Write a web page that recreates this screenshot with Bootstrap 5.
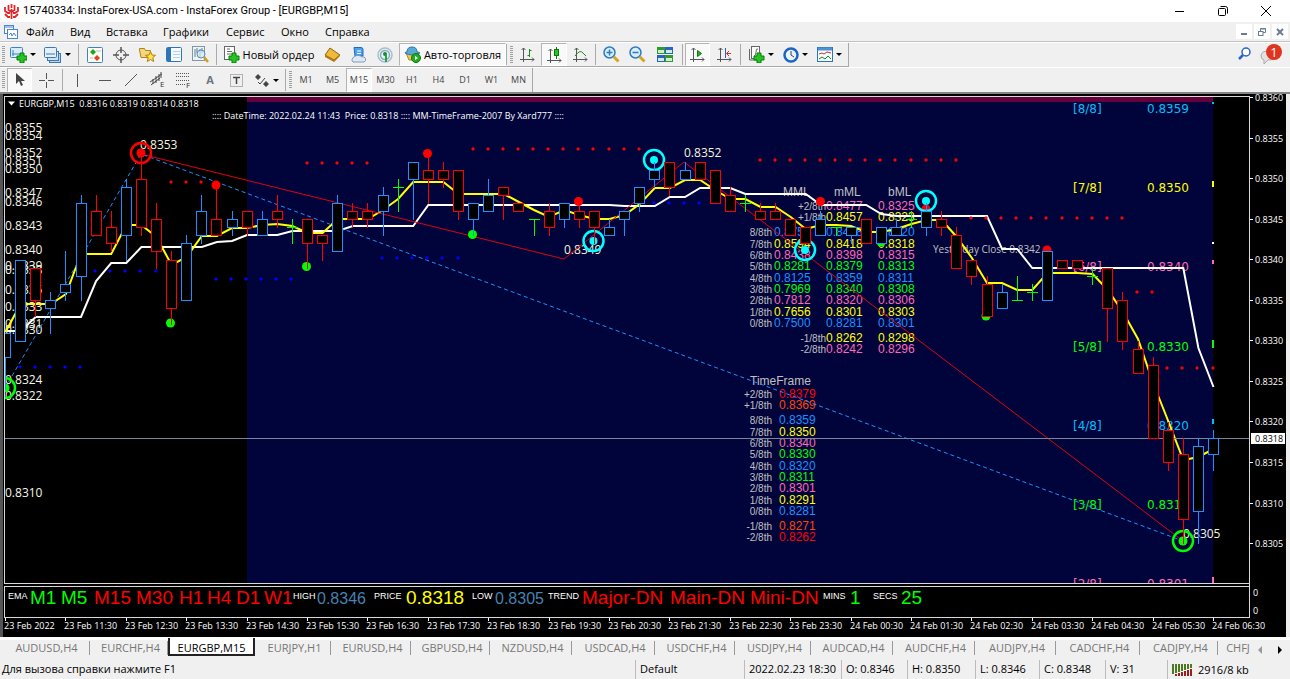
<!DOCTYPE html>
<html lang="ru">
<head>
<meta charset="utf-8">
<meta name="viewport" content="width=device-width, initial-scale=1">
<title>InstaForex – EURGBP,M15</title>
<link href="https://cdn.jsdelivr.net/npm/bootstrap@5.3.0/dist/css/bootstrap.min.css" rel="stylesheet">
<style>
body{font-family:"Open Sans","Noto Sans",sans-serif;font-size:11px;line-height:16px;color:#000;background:#f0f0f0}
svg{display:block;flex:none}
.title-bar{height:22px;background:#fff;padding-right:3px}
.title-text{font-family:Roboto,sans-serif;font-size:11px}
.win-btn{width:43px;height:22px;border:0;background:none;padding:0}
.menu-row{height:20px;border-bottom:1px solid #c2c2c2}
.menu-row a{color:#000;text-decoration:none}
.menu-items{display:grid;grid-template-columns:44px 36px 57px 63px 55px 44px 60px}
.mdi-group{gap:2px;padding-right:2px}
.mdi-btn{width:16px;height:15px;border:0;background:#fff;padding:0}
.tools-row{height:25px;border-top:1px solid #fff}
.tools-main,.tools-draw{display:grid;height:24px;border-right:1px solid #a8a8a8}
.tools-main{width:849px;border-bottom:1px solid #a8a8a8;grid-template-columns:8px 30px 38px 6px 26px 26px 26px 27px 27px 5px 100px 26px 26px 28px 107px 2px 6px 27px 26px 26px 5px 26px 27px 27px 7px 25px 28px 6px 34px 34px 35px}
.tools-draw{width:533px;grid-template-columns:7px 25px 28px 4px 27px 27px 26px 27px 26px 26px 27px 33px 4px 6px 26px 27px 26px 27px 26px 27px 26px 27px 27px}
.tool{display:flex;align-items:center;justify-content:center;gap:3px;border:0;background:none;padding:0;color:#000;white-space:nowrap;min-width:0}
.tool.pressed{background:#f9f9f9;border:1px solid #b4b4b4;border-right-color:#fff;border-bottom-color:#fff}
.tool.period{font-size:9px;color:#444}
.divider{border-left:1px solid #aaa;margin:1px 0 1px 2px}
.grip{margin:3px 2px 3px 2px;background:repeating-linear-gradient(#a0a0a0 0 1px,#f0f0f0 1px 2px);width:3px}
.drop::after{content:"";border:3px solid transparent;border-top-color:#000;border-bottom:0}
.chart-frame{border-top:2px solid #858585}
.chart-frame svg{width:100%;height:auto;background:#000}
.chart-tabs{height:23px;display:grid;grid-template-columns:90px 78px 87px 76px 80px 79px 82px 83px 80px 76px 82px 82px 81px 84px 78px 36px 1fr;border-top:3px solid #fff;background:#f0f0f0}
.chart-tab{border:0;border-right:1px solid #999;background:none;color:#777;padding:0 0 0 4px;height:14px;line-height:14px;font-size:11px;text-align:center;margin-top:1px;white-space:nowrap;overflow:hidden}
.chart-tab.current{background:#fff;color:#000;border:2px solid #222;border-top:0;height:18px;margin-top:-2px;padding:3px 0 0}
.chart-tab.flat{border-right:0}
.status-row{height:19px;line-height:18px;display:grid;grid-template-columns:635px 109px 97px 66px 68px 64px 66px 62px 1fr;background:#f0f0f0}
.status-cell{border-left:1px solid #bbb;padding-left:4px;white-space:nowrap}
.status-cell.hint{border-left:0;padding-left:2px}
</style>
</head>
<body>
<header>
 <div class="title-bar d-flex align-items-center">
  <svg class="ms-1" width="15" height="17" viewBox="0 0 15 17" fill="none" stroke="#e0262b" stroke-width="2"><path d="M7.500 6v10M4.500 2v5l3 2 3-2V2M7.500 1v4M1 4v4l3 2h2M14 4v4l-3 2H9M1 11l3 3h2M14 11l-3 3H9" stroke-width="1.800"/></svg>
  <span class="title-text flex-grow-1 ps-1">15740334: InstaForex-USA.com - InstaForex Group - [EURGBP,M15]</span>
  <button class="win-btn" aria-label="Свернуть"><svg class="mx-auto" width="10" height="10" stroke="#000"><path d="M0 5.500h9"/></svg></button>
  <button class="win-btn" aria-label="Развернуть"><svg class="mx-auto" width="10" height="10" fill="none" stroke="#000"><rect x=".5" y="2.500" width="7" height="7" rx="1"/><path d="M2.500.5h5a2 2 0 0 1 2 2v5"/></svg></button>
  <button class="win-btn" aria-label="Закрыть"><svg class="mx-auto" width="10" height="10" stroke="#000"><path d="M0 0l10 10M10 0L0 10"/></svg></button>
 </div>
 <nav class="menu-row d-flex align-items-center">
  <svg class="ms-1" width="14" height="14" viewBox="0 0 14 14" fill="#fff" stroke="#4a86d0"><rect x=".5" y=".5" width="9" height="8"/><rect x="3.500" y="4.500" width="10" height="9"/><path d="M1 2h9M5 10l2-2 1 3 2-3 2 3" fill="none"/></svg>
  <div class="menu-items flex-grow-1 ms-2"><a href="#">Файл</a><a href="#">Вид</a><a href="#">Вставка</a><a href="#">Графики</a><a href="#">Сервис</a><a href="#">Окно</a><a href="#">Справка</a></div>
  <div class="mdi-group d-flex">
   <button class="mdi-btn" aria-label="Свернуть окно"><svg class="mx-auto" width="8" height="8"><path d="M1 6h6" stroke="#6b7c92" stroke-width="2"/></svg></button>
   <button class="mdi-btn" aria-label="Восстановить окно"><svg class="mx-auto" width="8" height="8" fill="none" stroke="#6b7c92"><path d="M2.500 3V.5h5v4H5M2 1h6"/><rect x=".5" y="3.500" width="4.500" height="4"/></svg></button>
   <button class="mdi-btn" aria-label="Закрыть окно"><svg class="mx-auto" width="8" height="8" stroke="#6b7c92" stroke-width="2"><path d="M1 1l6 6M7 1L1 7"/></svg></button>
  </div>
 </nav>
 <div class="tools-row d-flex align-items-start">
  <div class="tools-main">
   <i class="grip"></i>
   <button class="tool drop" aria-label="Новый график"><svg width="17" height="16"><rect x=".5" y=".5" width="12" height="10" rx="1" fill="#d7ebfb" stroke="#3f83bb"/><path d="M3 3v6M2 7h8" fill="none" stroke="#3f83bb"/><path d="M7 9h3V6h4v3h3v4h-3v3h-4v-3H7z" fill="#22c522" stroke="#087c08"/></svg></button>
   <button class="tool drop" aria-label="Профили"><svg width="18" height="16" stroke="#3f78b0"><rect x="5.500" y="6.500" width="11" height="9" fill="#b8d6ee"/><rect x="3.500" y="4.500" width="11" height="9" fill="#cfe3f4"/><rect x=".5" y=".5" width="12" height="10" rx="1" fill="#e4f1fb"/><path d="M2 7h9"/></svg></button>
   <i class="divider"></i>
   <button class="tool" aria-label="Обзор рынка"><svg width="16" height="16"><rect x=".5" y=".5" width="15" height="15" rx="1" fill="#fffdf2" stroke="#3f83bb"/><path d="M6 2l3 3-3 3-3-3z" fill="#13a92a"/><path d="M10 8l3 3-3 3-3-3z" fill="#e0402a"/><path d="M9 4h5M3 11h3" stroke="#bbb"/></svg></button>
   <button class="tool" aria-label="Окно данных"><svg width="16" height="16" fill="none" stroke="#555"><circle cx="8" cy="8" r="5"/><path d="M8 0v6M8 10v6M0 8h6M10 8h6" stroke-width="1.500"/></svg></button>
   <button class="tool" aria-label="Навигатор"><svg width="17" height="16"><path d="M.5 3V1.500h5l1 2h5v7H2z" fill="#f4d77a" stroke="#ad8424"/><path d="M11.500 4.500l1.500 3.500 3.500.3-2.700 2.300.9 3.900-3.200-2-3.200 2 .9-3.900L6.500 8.300l3.500-.3z" fill="#ffe14a" stroke="#b08010"/></svg></button>
   <button class="tool" aria-label="Терминал"><svg width="16" height="15"><rect x=".5" y=".5" width="15" height="14" rx="1" fill="#f4faff" stroke="#2e74b8"/><path d="M3 1v13" stroke="#2e74b8" stroke-width="4"/><path d="M7 4.500h7M7 7.500h7M7 10.500h7" stroke="#b9cfe4"/></svg></button>
   <button class="tool" aria-label="Тестер стратегий"><svg width="17" height="17"><rect x=".5" y=".5" width="12" height="14" fill="#eef4f8" stroke="#8097a8"/><path d="M3 3v8M5 2v5M8 3v8M10 2v5" stroke="#5c7d95"/><circle cx="9" cy="8" r="4" fill="#d2ebfa" fill-opacity=".7" stroke="#5b8bb0"/><path d="M12 11l4 5" stroke="#d39b20" stroke-width="2.500"/></svg></button>
   <i class="divider"></i>
   <button class="tool"><svg width="16" height="17"><rect x=".5" y=".5" width="10" height="13" fill="#fff" stroke="#666"/><path d="M3 3h3M3 5.500h5M3 8h5" stroke="#666"/><path d="M5 10h3V7h4v3h3v4h-3v3H8v-3H5z" fill="#22c522" stroke="#087c08"/></svg>Новый ордер</button>
   <button class="tool" aria-label="Редактор"><svg width="17" height="15"><path d="M1 8l5-7 10 7-6 5z" fill="#efb93a" stroke="#8e610c"/><path d="M1 8v2l9 5 6-6V7l-6 6z" fill="#b47a14"/></svg></button>
   <button class="tool" aria-label="Маркет"><svg width="17" height="16"><path d="M4 .5h7a2 2 0 0 1 2 2V9H5z" fill="#4ba3ee" stroke="#1e6cb8"/><path d="M7 4h4M7 6.500h4" stroke="#fff"/><path d="M3 15a3 3 0 0 1 1-5 5 4 0 0 1 8 0 2.500 2.500 0 0 1 2 5z" fill="#dde8f5" stroke="#8399b5"/></svg></button>
   <button class="tool" aria-label="Сигналы"><svg width="16" height="16" fill="none"><circle cx="8" cy="8" r="7" stroke="#a5bed0" stroke-width="1.500"/><circle cx="8" cy="8" r="4.500" stroke="#7db0c0" stroke-width="1.500"/><circle cx="8" cy="7" r="2" fill="#168e30"/><path d="M9 8v7" stroke="#2aa344" stroke-width="2"/></svg></button>
   <button class="tool pressed"><svg width="17" height="17"><path d="M2 7h12l-3 7H5z" fill="#f3c652" stroke="#b58622"/><path d="M3 6q0-5 5-5t5 5q3 0 3 1-8 4-15 0 0-1 2-1z" fill="#58a9d8" stroke="#2b78a8"/><circle cx="12" cy="12" r="4.500" fill="#20ae20" stroke="#087808"/><path d="M11 10l3 2-3 2z" fill="#fff"/></svg>Авто-торговля</button>
   <i class="divider ms-0"></i><i class="grip"></i>
   <button class="tool" aria-label="Бары"><svg width="15" height="15" fill="none" stroke="#555"><path d="M3.500 15V1M1.500 3l2-2 2 2M0 12.500h14M12 10.500l2 2-2 2"/><path d="M9.500 2v8M9.500 3.500h2M7.500 8.500h2" stroke="#178c17"/></svg></button>
   <button class="tool pressed" aria-label="Свечи"><svg width="15" height="16" fill="none" stroke="#555"><path d="M3.500 16V2M1.500 4l2-2 2 2M0 13.500h14M12 11.500l2 2-2 2"/><path d="M9.500 0v12" stroke="#087c08"/><rect x="7.500" y="2.500" width="4" height="6" fill="#22c522" stroke="#087c08"/></svg></button>
   <button class="tool" aria-label="Линия"><svg width="15" height="15" fill="none" stroke="#555"><path d="M3.500 15V1M1.500 3l2-2 2 2M0 12.500h14M12 10.500l2 2-2 2"/><path d="M2 9q5-7 8-3l3 3" stroke="#178c17"/></svg></button>
   <i class="divider"></i>
   <button class="tool" aria-label="Увеличить"><svg width="17" height="17"><circle cx="6.500" cy="6.500" r="5.500" fill="#d8eefb" stroke="#2f7bbd" stroke-width="1.500"/><path d="M3.500 6.500h6M6.500 3.500v6" stroke="#2f7bbd" stroke-width="1.500"/><path d="M10.500 10.500l5 5" stroke="#d3a52a" stroke-width="3"/></svg></button>
   <button class="tool" aria-label="Уменьшить"><svg width="17" height="17"><circle cx="6.500" cy="6.500" r="5.500" fill="#d8eefb" stroke="#2f7bbd" stroke-width="1.500"/><path d="M3.500 6.500h6" stroke="#2f7bbd" stroke-width="1.500"/><path d="M10.500 10.500l5 5" stroke="#d3a52a" stroke-width="3"/></svg></button>
   <button class="tool" aria-label="Плитка"><svg width="16" height="15"><path d="M0 0h8v7H0zM8 8h8v7H8z" fill="#2c9c2c"/><path d="M8 0h8v7H8zM0 8h8v7H0z" fill="#2a62c8"/><path d="M1 3h6v3H1zM9 3h6v3H9zM1 11h6v3H1zM9 11h6v3H9z" fill="#d4ecd4"/></svg></button>
   <i class="divider mx-1"></i>
   <button class="tool pressed" aria-label="Автопрокрутка"><svg width="15" height="15" fill="none" stroke="#555"><path d="M3.500 15V1M1.500 3l2-2 2 2M0 12.500h14M12 10.500l2 2-2 2"/><path d="M7.500 3.500v6l4-3z" fill="#22b522" stroke="#087c08"/></svg></button>
   <button class="tool" aria-label="Сдвиг графика"><svg width="15" height="15" fill="none" stroke="#555"><path d="M3.500 15V1M1.500 3l2-2 2 2M0 12.500h14M12 10.500l2 2-2 2"/><path d="M8.500 1v10" stroke="#2a62c8"/><path d="M14 6.500H9.500M12 4l-2.500 2.500L12 9" stroke="#c8361c"/></svg></button>
   <i class="divider"></i>
   <button class="tool drop" aria-label="Индикаторы"><svg width="16" height="17"><rect x="2.500" y=".5" width="8" height="12" fill="#fff" stroke="#666"/><path d="M.5 3v11h8M5 10q2 0 2-4t2-3" fill="none" stroke="#666"/><path d="M5 10h3V7h4v3h3v4h-3v3H8v-3H5z" fill="#22c522" stroke="#087c08"/></svg></button>
   <button class="tool drop" aria-label="Периоды"><svg width="16" height="16"><circle cx="8" cy="8" r="6.500" fill="#eaf4fd" stroke="#1c64bf" stroke-width="2.500"/><path d="M8 4v4l3 2" fill="none" stroke="#345"/></svg></button>
   <button class="tool drop" aria-label="Шаблоны"><svg width="16" height="15"><rect x=".5" y=".5" width="15" height="14" fill="#f4faff" stroke="#2e74b8"/><path d="M1 2h14" stroke="#4c92d4" stroke-width="3"/><path d="M2 7l3-1 2 1 3-2 4 1" fill="none" stroke="#c8361c"/><path d="M2 12l3-2 3 2 3-3 3 3" fill="none" stroke="#178c17"/></svg></button>
  </div>
  <div class="flex-grow-1"></div>
  <button class="tool mt-1 me-2" aria-label="Поиск"><svg width="13" height="13"><circle cx="8" cy="5" r="4" fill="#fff" stroke="#2b62c9" stroke-width="1.500"/><path d="M5 8l-4 4" stroke="#2b62c9" stroke-width="2.500"/></svg></button>
  <button class="tool me-2" aria-label="Уведомления"><svg width="23" height="22"><path d="M9 8q-7 0-7 5 0 3 3 4v4l4-4q7 0 8-4z" fill="#e2e2e2" stroke="#aaa"/><circle cx="15" cy="9" r="8" fill="#de3420"/><text x="15" y="14" font-size="13" text-anchor="middle" fill="#fff">1</text></svg></button>
 </div>
 <div class="tools-row">
  <div class="tools-draw">
   <i class="grip"></i>
   <button class="tool pressed" aria-label="Курсор"><svg width="10" height="14"><path d="M1 0v11l3-3 2 5 2-1-2-4h4z" fill="#444"/></svg></button>
   <button class="tool" aria-label="Перекрестие"><svg width="15" height="15" stroke="#555"><path d="M7.500 0v6M7.500 9v6M0 7.500h6M9 7.500h6"/></svg></button>
   <i class="divider"></i>
   <button class="tool" aria-label="Вертикальная линия"><svg width="3" height="13" stroke="#555"><path d="M1.500 0v13"/></svg></button>
   <button class="tool" aria-label="Горизонтальная линия"><svg width="12" height="3" stroke="#555"><path d="M0 1.500h12"/></svg></button>
   <button class="tool" aria-label="Трендовая линия"><svg width="12" height="12" stroke="#555"><path d="M0 12L12 0"/></svg></button>
   <button class="tool" aria-label="Канал"><svg width="16" height="18" stroke="#444" fill="none"><path d="M0 11l12-8M1 14l9-7M3 13V8M6 12V5M9 10V3M11 7V1"/><text x="10" y="16" font-size="8" fill="#333" stroke="none">E</text></svg></button>
   <button class="tool" aria-label="Фибоначчи"><svg width="16" height="18" stroke="#555"><path d="M0 2.500h14M0 5.500h14M0 9.500h14M0 13.500h9" stroke-dasharray="1 1"/><text x="10" y="17" font-size="8" fill="#333" stroke="none">F</text></svg></button>
   <button class="tool fw-bold text-secondary" aria-label="Текст">A</button>
   <button class="tool" aria-label="Метка"><svg width="13" height="13"><rect x=".5" y=".5" width="12" height="12" fill="none" stroke="#777" stroke-dasharray="1 1"/><path d="M3 3.500h7M6.500 3v7" stroke="#444" stroke-width="1.500"/></svg></button>
   <button class="tool drop" aria-label="Стрелки"><svg width="15" height="13" fill="#444"><path d="M3 0l3 3-3 3-3-3zM11 7l3 3-3 3-3-3z"/><path d="M3 8l2 2 5-6" fill="none" stroke="#444"/></svg></button>
   <i class="divider"></i><i class="grip"></i>
   <button class="tool period">M1</button><button class="tool period">M5</button><button class="tool period pressed">M15</button><button class="tool period">M30</button><button class="tool period">H1</button><button class="tool period">H4</button><button class="tool period">D1</button><button class="tool period">W1</button><button class="tool period">MN</button>
  </div>
 </div>
</header>
<main class="chart-frame">
 <svg id="chart" viewBox="0 94 1290 543" role="img" aria-label="EURGBP,M15"></svg>
</main>
<nav class="chart-tabs" id="tabs"></nav>
<footer class="status-row">
 <span class="status-cell hint">Для вызова справки нажмите F1</span>
 <span class="status-cell">Default</span><span class="status-cell">2022.02.23 18:30</span><span class="status-cell">O: 0.8346</span><span class="status-cell">H: 0.8350</span><span class="status-cell">L: 0.8346</span><span class="status-cell">C: 0.8348</span><span class="status-cell">V: 31</span>
 <span class="status-cell d-flex gap-1 align-items-center"><svg width="22" height="13"><path d="M1 1v10M4 1v9M7 1v8M10 1v7M13 1v6M16 1v5M19 1v4" stroke="#4c7a20" stroke-width="2"/><path d="M4 13v-2M7 13v-3M10 13V9M13 13V8M16 13V7M19 13V6" stroke="#9a2020" stroke-width="2"/></svg>2916/8 kb</span>
</footer>
<script src="https://cdn.jsdelivr.net/npm/bootstrap@5.3.0/dist/js/bootstrap.bundle.min.js"></script>
<script>
const out = [];
const SANS = 'Open Sans', ARIAL = 'Liberation Sans', WIDE = 'DejaVu Sans';
const BLUE = '#1e90ff', RED = '#ff0000', LIME = '#00ff00', PINK = '#ff69b4', YEL = '#ffff00', GREY = '#c0c0c0', SKY = '#00bfff';
const bx = i => 5.5 + 15.1 * i;
const py = q => 584 - 8.11 * q;
const text = (x, y, s, size, fill, font, anchor = 'start') =>
  out.push(`<text x="${x}" y="${y}" font-size="${size}" fill="${fill}" font-family="${font}, sans-serif" text-anchor="${anchor}" xml:space="preserve">${s}</text>`);
const line = (d, stroke, w = 1, extra = '') => out.push(`<path d="${d}" fill="none" stroke="${stroke}" stroke-width="${w}" ${extra}/>`);
const rect = (x, y, w, h, fill) => out.push(`<rect x="${x}" y="${y}" width="${w}" height="${h}" fill="${fill}"/>`);

out.push('<defs><clipPath id="plot"><rect x="5" y="97" width="1244" height="486"/></clipPath></defs>');
rect(0, 94, 3, 543, '#555'); rect(1286, 94, 4, 543, '#eee');
out.push('<g clip-path="url(#plot)">');
rect(247, 102, 966, 481, '#00043a');
rect(247, 97, 966, 5, '#66003a');

// price levels on the right side
[['[8/8]', '0.8359', SKY], ['[7/8]', '0.8350', YEL], ['[6/8]', '0.8340', PINK], ['[5/8]', '0.8330', LIME], ['[4/8]', '0.8320', SKY], ['[3/8]', '0.8310', LIME], ['[2/8]', '0.8301', PINK]]
  .forEach(([a, b, c], k) => { const y = 113 + Math.round(79.2 * k); text(1073, y, a, 12, c, WIDE); text(1147, y, b, 12, c, WIDE); });
rect(1212, 102, 2, 2, SKY); rect(1212, 181, 2, 6, YEL); rect(1212, 242, 2, 2, '#fff'); rect(1212, 260, 2, 4, PINK); rect(1212, 340, 2, 8, LIME); rect(1212, 419, 2, 5, SKY); rect(1212, 577, 2, 6, PINK);

// Murrey math tables
const rows = ['+2/8th', '+1/8th', '8/8th', '7/8th', '6/8th', '5/8th', '4/8th', '3/8th', '2/8th', '1/8th', '0/8th', '-1/8th', '-2/8th'];
const tone = [PINK, YEL, BLUE, YEL, PINK, LIME, BLUE, LIME, PINK, YEL, BLUE, YEL, PINK];
const tone2 = [RED, '#ff4500', BLUE, YEL, PINK, LIME, BLUE, LIME, PINK, YEL, BLUE, '#ff4500', RED];
const mml = ['', '', '0.8750', '0.8594', '0.8438', '0.8281', '0.8125', '0.7969', '0.7812', '0.7656', '0.7500', '', ''];
const mid = ['0.8477', '0.8457', '0.8438', '0.8418', '0.8398', '0.8379', '0.8359', '0.8340', '0.8320', '0.8301', '0.8281', '0.8262', '0.8242'];
const bml = ['0.8325', '0.8323', '0.8320', '0.8318', '0.8315', '0.8313', '0.8311', '0.8308', '0.8306', '0.8303', '0.8301', '0.8298', '0.8296'];
const tf = ['0.8379', '0.8369', '0.8359', '0.8350', '0.8340', '0.8330', '0.8320', '0.8311', '0.8301', '0.8291', '0.8281', '0.8271', '0.8262'];
const dy = [0, 11, 26, 38, 49, 60, 72, 83, 94, 106, 117, 132, 143];
text(783, 196, 'MML', 12, GREY, ARIAL); text(834, 196, 'mML', 12, GREY, ARIAL); text(888, 196, 'bML', 12, GREY, ARIAL);
text(750, 385, 'TimeFrame', 12, GREY, ARIAL);
rows.forEach((r, k) => {
  const y = 210 + dy[k], y2 = 398 + dy[k], outer = k < 2 || k > 10;
  text(outer ? 826 : 772, y, r, 10, GREY, ARIAL, 'end');
  text(774, y, mml[k], 12, tone[k], ARIAL);
  text(826, y, mid[k], 12, tone[k], ARIAL);
  text(878, y, bml[k], 12, tone[k], ARIAL);
  text(772, y2, r, 10, GREY, ARIAL, 'end');
  text(779, y2, tf[k], 12, tone2[k], ARIAL);
});
text(933, 253, 'Yesterday Close 0.8342', 10, GREY, SANS);

// horizontal level labels
[[55, 132], [54, 140], [52, 157], [51, 165], [50, 173], [47, 197], [46, 206], [43, 230], [40, 254], [39, 270], [38, 274], [35, 294], [33, 311], [31, 328], [30, 334], [24, 384], [22, 400], [10, 497]]
  .forEach(([q, y]) => text(5, y, '0.83' + q, 12, '#f5f5e8', SANS));
[[140, 149, '0.8353'], [684, 157, '0.8352'], [564, 254, '0.8349'], [1183, 538, '0.8305']].forEach(([x, y, s]) => text(x, y, s, 12, '#f5f5dc', SANS));

// moving averages
const poly = (ys, c) => line('M' + ys.map((y, i) => bx(i).toFixed(1) + ' ' + y).join('L'), c, 2);
poly([331, 331, 317, 317, 317, 317, 281, 263, 263, 247, 247, 247, 247, 247, 242, 241, 235, 235, 235, 231, 231, 231, 231, 226, 226, 226, 226, 226, 205, 205, 205, 205, 205, 205, 205, 205, 205, 205, 205, 205, 205, 206, 206, 206, 197, 197, 188, 188, 188, 194, 194, 194, 194, 194, 205, 205, 205, 205, 214, 216, 216, 216, 216, 216, 216, 216, 249, 249, 268, 268, 268, 268, 268, 268, 268, 268, 268, 268, 268, 348, 387], '#fff');
poly([332, 304, 304, 304, 294, 254, 254, 254, 225, 225, 237, 265, 257, 236, 236, 228, 228, 225, 224, 226, 233, 233, 219, 219, 219, 210, 199, 182, 182, 182, 194, 194, 194, 194, 202, 210, 217, 210, 215, 219, 219, 215, 204, 188, 188, 180, 180, 190, 199, 199, 207, 207, 217, 229, 225, 225, 226, 232, 232, 229, 224, 220, 220, 237, 258, 283, 283, 290, 290, 273, 273, 273, 274, 290, 312, 339, 383, 421, 460, 457, 449], YEL);

// zigzags
line('M141 154L564 259L684 162L1183 541', '#e00010', 1);
line('M5 388L141 154L1183 541', BLUE, 1, 'stroke-dasharray="4 3"');
line('M5 438.500H1249', '#778899', 1);

// support and resistance dots: first bar, last bar, height
const dots = (a, b, y, c) => { for (let i = a; i <= b; i++) { const x = Math.round(bx(i)) - 1; out.push(`<path d="M${x} ${y - 2}l2 2l-2 2l-2 -2z" fill="${c}"/>`); } };
[[11, 13, 182], [20, 24, 163], [31, 42, 149], [50, 63, 160], [64, 74, 218], [75, 76, 292], [77, 80, 368]].forEach(d => dots(...d, RED));
[[1, 5, 367], [6, 10, 271], [14, 19, 279], [25, 30, 258], [43, 47, 203]].forEach(d => dots(...d, '#0000ff'));
const disc = (x, y, c, r = 4.5) => out.push(`<circle cx="${x}" cy="${y}" r="${r}" fill="${c}"/>`);
[[141, 153], [216, 185], [427.5, 153.5], [578.5, 201.5], [820.5, 201.5], [926, 209], [1047, 250]].forEach(p => disc(...p, RED));
[[170.5, 323], [306.5, 266.5], [472.5, 234.5], [881, 242], [986, 316], [5, 388], [1183, 541]].forEach(p => disc(...p, LIME));

// rings around the turning points
[[141, 153, RED], [5, 388, LIME], [1183, 541, LIME], [654, 160, '#00ffff'], [593.5, 241, '#00ffff'], [805, 250, '#00ffff'], [926, 201, '#00ffff']].forEach(([x, y, c]) => {
  out.push(`<circle cx="${x}" cy="${y}" r="10" fill="none" stroke="${c}" stroke-width="2.5"/>`); disc(x, y, c, 4);
});

// bars: colour, body top, body bottom, high, low (pips above 0.8300)
const bars = `b31,28,31,24 b40,30,40,30 r39,35,39,33 b35,34,36,31 b37,36,41,35 b47,38,48,35 r46,43,48,43 r44,42,46,41 b49,43,50,40 r50,44,53,43 r45,41,47,39 r40,34,41,32 b42,35,43,35 b46,43,48,42 r45,43,49,43 b45,44,46,43 r46,44,46,43
b45,43,46,43 r46,45,48,44 g44,44,45,42 r45,42,45,39 r43,42,43,40 b47,41,48,41 r46,45,47,44 r46,45,47,44 b48,46,49,43 g49,49,50,46 b52,50,52,45 r51,50,53,47 r51,50,52,49 r51,46,51,45 b47,45,47,43 b48,46,50,46 r49,48,49,45 r47,46,47,46 g45,45,45,43 r46,44,47,43
b47,45,47,44 r46,45,47,44 r46,44,46,42 b44,43,45,43 b46,45,46,43 b49,47,49,46 b51,50,52,49 r52,49,52,48 b51,50,52,50 r52,50,52,50 r51,47,51,47 r48,46,49,46 g47,47,48,46 r46,45,47,45 r46,45,47,45
r45,43,45,43 r44,42,44,42 b45,43,46,43 g44,44,44,43 b44,43,44,42 r45,42,45,42 b44,42,44,42 b44,43,45,43 g45,45,46,44 b46,44,47,43 r45,44,46,43 r43,39,44,39 r40,38,40,37 r37,33,38,33 b36,34,37,34 g35,35,38,35 g36,36,37,35 b41,35,41,35 r40,39,40,39 r40,39,40,39 g38,38,39,37
r39,34,39,30 r35,30,36,29 r29,26,30,26 r27,18,28,18 r19,15,20,14 r16,8,18,5 b17,9,18,5 b18,16,19,14`.split(/\s+/);
const shade = { b: BLUE, r: RED, g: LIME };
out.push('<g shape-rendering="crispEdges">');
bars.forEach((s, i) => {
  const [t, b, h, l] = s.slice(1).split(',').map(v => Math.round(py(+v))), x = Math.floor(bx(i)), c = shade[s[0]];
  line(`M${x + .5} ${h}V${l + 1}`, c);
  if (s[0] === 'g') line(`M${x - 5} ${t + .5}h11`, c);
  else out.push(`<rect x="${x - 4.5}" y="${t + .5}" width="10" height="${b - t}" fill="#000" stroke="${c}"/>`);
});
out.push('</g></g>');

// chart captions
out.push('<path d="M8 101.500h7l-3.500 4z" fill="#fff"/>');
text(19, 107, 'EURGBP,M15  0.8316 0.8319 0.8314 0.8318', 9, '#fff', SANS);
text(212, 119, ':::: DateTime: 2022.02.24 11:43  Price: 0.8318 :::: MM-TimeFrame-2007 By Xard777 ::::', 9, '#fff', SANS);

// frames and price scale
line('M4.500 96.500H1250M1249.500 96V617M4.500 96V584M4 583.500H1250M4 586.500H1250M4.500 586V617.500M4 617.500H1250', '#d8d8d8');
for (let k = 0; k < 12; k++) { const y = Math.round(98 + 40.55 * k); line(`M1250 ${y - .5}h3`, '#fff'); text(1255, y + 3, '0.' + (8360 - 5 * k), 9, '#fff', SANS); }
rect(1251, 433, 34, 11, '#fff'); text(1255, 442, '0.8318', 9, '#000', SANS);
text(1253, 596, '0', 9, '#fff', SANS); text(1253, 614, '0', 9, '#fff', SANS);

// trend summary
[[8, 'EMA'], [293, 'HIGH'], [374, 'PRICE'], [472, 'LOW'], [548, 'TREND'], [823, 'MINS'], [873, 'SECS']].forEach(([x, s]) => text(x, 599, s, 9, '#fff', ARIAL));
[[30, 'M1', LIME], [61, 'M5', LIME], [94, 'M15', RED], [136, 'M30', RED], [179, 'H1', RED], [207, 'H4', RED], [236, 'D1', RED], [264, 'W1', RED], [406, '0.8318', YEL], [582, 'Major-DN', RED], [670, 'Main-DN', RED], [750, 'Mini-DN', RED], [850, '1', LIME], [901, '25', LIME]].forEach(([x, s, c]) => text(x, 604, s, 19, c, ARIAL));
text(317, 604, '0.8346', 16, '#4682b4', ARIAL); text(495, 604, '0.8305', 16, '#4682b4', ARIAL);

// time scale
'2022,11:30,12:30,13:30,14:30,15:30,16:30,17:30,18:30,19:30,20:30,21:30,22:30,23:30,00:30,01:30,02:30,03:30,04:30,05:30,06:30'.split(',').forEach((t, k) => {
  const x = Math.round(4 + 60.4 * k);
  line(`M${x + 1.5} 618v3`, '#fff'); text(x, 629, (k < 14 ? '23' : '24') + ' Feb ' + t, 9, '#fff', SANS);
});
document.getElementById('chart').innerHTML = out.join('');

document.getElementById('tabs').innerHTML = 'AUDUSD,H4 EURCHF,H4 EURGBP,M15 EURJPY,H1 EURUSD,H4 GBPUSD,H4 NZDUSD,H4 USDCAD,H4 USDCHF,H4 USDJPY,H4 AUDCAD,H4 AUDCHF,H4 AUDJPY,H4 CADCHF,H4 CADJPY,H4 CHFJ'
  .split(' ').map(t => `<button class="chart-tab${t === 'EURGBP,M15' ? ' current' : t === 'CHFJ' ? ' flat' : ''}">${t}</button>`).join('') +
  '<span class="d-flex gap-3 ps-1 align-items-center"><svg width="4" height="8"><path d="M4 0L0 4l4 4z" fill="#999"/></svg><svg width="4" height="8"><path d="M0 0l4 4-4 4z"/></svg></span>';
</script>
</body>
</html>
